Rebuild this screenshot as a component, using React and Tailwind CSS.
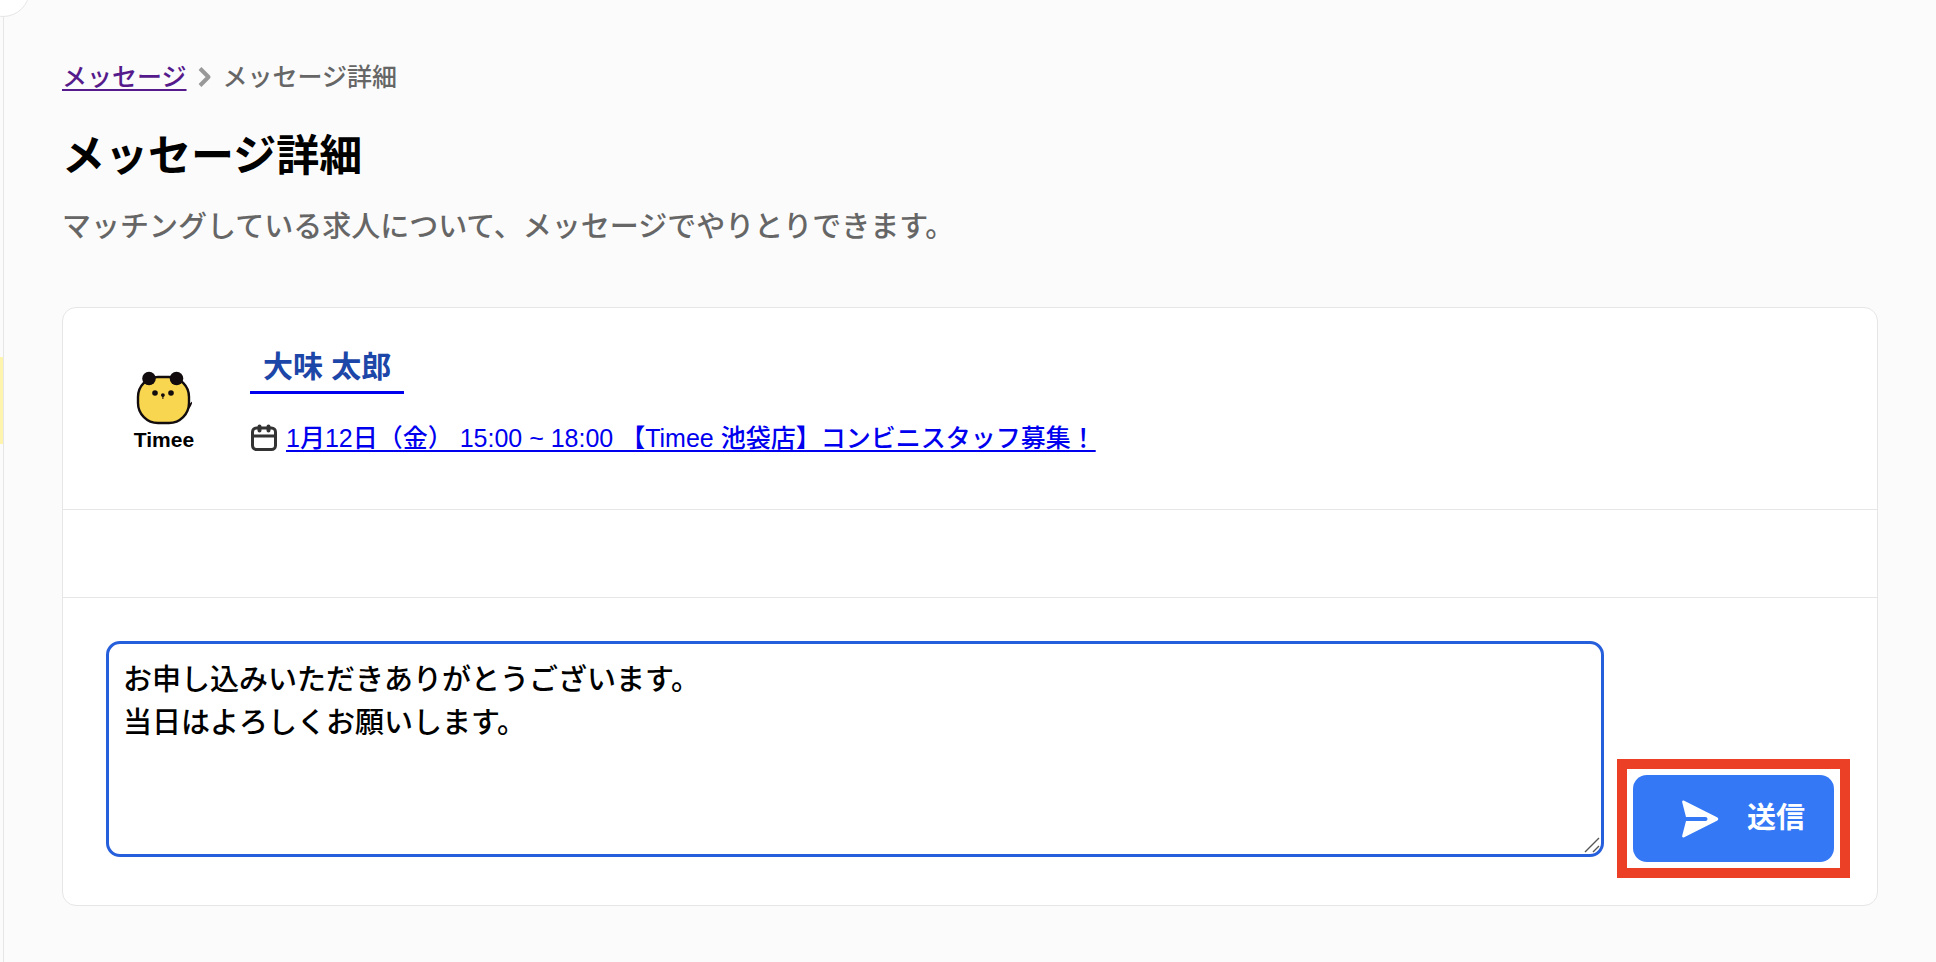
import { useState } from 'react';

function ChevronIcon() {
    return (
        <svg viewBox="0 0 14 20" className="w-[14px] h-5 text-[#999999]" fill="none" stroke="currentColor" strokeWidth="4" strokeLinejoin="round" aria-hidden="true">
            <path d="M2 1.5 10.5 10 2 18.5" />
        </svg>
    );
}

function CalendarIcon() {
    return (
        <svg viewBox="0 0 28 28" className="w-7 h-7 shrink-0 text-[#333333]" fill="none" stroke="currentColor" strokeWidth="3" strokeLinecap="round" aria-hidden="true">
            <rect x="2.5" y="4" width="23" height="21.5" rx="4" />
            <path d="M2.5 12h23" />
            <path d="M9.5 2.5v4M18.5 2.5v4" strokeWidth="4" />
        </svg>
    );
}

function SendIcon() {
    return (
        <svg viewBox="0 0 38 38" className="w-[38px] h-[38px]" fill="currentColor" aria-hidden="true">
            <path d="M1.2 2.2C.9.9 2 .3 3.2.8L36 17.2c1.7.9 1.7 2.7 0 3.6L3.2 37.2C2 37.7.9 37.1 1.2 35.8L5 21h19.5a2 2 0 0 0 0-4H5Z" />
        </svg>
    );
}

function ResizeGrip() {
    return (
        <svg viewBox="0 0 16 16" className="pointer-events-none absolute right-1 bottom-1 w-4 h-4" fill="none" stroke="#555555" strokeWidth="1.4" aria-hidden="true">
            <path d="M1 15 15 1M9 15l6-6" />
        </svg>
    );
}

function TimeeLogo() {
    return (
        <div className="flex w-[62px] flex-col items-center">
            <svg viewBox="0 0 56 54" className="w-14 h-[54px]" aria-hidden="true">
                <path d="M49 36c3-1.500 5.500-3.500 7.500-6C56 34.500 53 39 47 43Z" fill="#120c0e" />
                <rect x="2" y="6" width="51" height="46" rx="20" fill="#f8d650" stroke="#120c0e" strokeWidth="2.4" />
                <circle cx="13" cy="7.5" r="6.8" fill="#120c0e" />
                <circle cx="40.5" cy="7.5" r="6.8" fill="#120c0e" />
                <circle cx="19" cy="22" r="2.8" fill="#120c0e" />
                <circle cx="35" cy="22" r="2.8" fill="#120c0e" />
                <path d="M25 24a1.9 1.8 0 1 1 3.8 0c0 1-.8 1.800-1.400 2v2h-1v-2c-.6-.2-1.400-1-1.400-2Z" fill="#120c0e" />
            </svg>
            <span className="mt-[5px] text-[21px] leading-5 font-bold text-black">Timee</span>
        </div>
    );
}

export default function App() {
    const [message, setMessage] = useState('お申し込みいただきありがとうございます。\n当日はよろしくお願いします。');

    return (
        <div className="flex min-h-screen overflow-hidden bg-[#fbfbfb] font-medium font-['Liberation_Sans','Noto_Sans_CJK_JP',sans-serif]">
            {/* Edge of the collapsed side menu */}
            <aside className="relative w-1 shrink-0 border-r border-[#e6e6e6] pt-[357px]">
                <div className="h-[87px] bg-[#fff4ae]"></div>
                <div className="absolute -top-[38px] -left-6 w-[54px] h-[55px] rounded-full border border-[#e6e6e6] bg-white"></div>
            </aside>

            <main className="min-w-0 flex-1 px-[58px] pt-[59px] pb-14">
                <nav className="flex items-center text-[25px] leading-9 text-[#666666]">
                    <a href="#messages" className="text-[#551a8b] underline decoration-2 underline-offset-3">メッセージ</a>
                    <span className="mx-[11px]"><ChevronIcon /></span>
                    <span>メッセージ詳細</span>
                </nav>

                <h1 className="mt-[31px] text-[43px] leading-[60px] font-bold text-black">メッセージ詳細</h1>
                <p className="mt-5 text-[29px] leading-[43px] text-[#666666]">マッチングしている求人について、メッセージでやりとりできます。</p>

                <section className="mt-[58px] rounded-[14px] border border-[#e6e6e6] bg-white">
                    <div className="flex h-[202px] border-b border-[#e6e6e6] pt-[29px] pl-[70px]">
                        <div className="mt-[34px]"><TimeeLogo /></div>
                        <div className="ml-[55px]">
                            <a href="#worker" className="inline-block border-b-[3px] border-[#0000ee] px-[13px] pt-[7px] pb-px text-[30px] leading-[46px] font-bold text-[#1c46a8]">大味 太郎</a>
                            <div className="mt-[26px] flex items-center gap-2">
                                <CalendarIcon />
                                <a href="#offer" className="text-[25px] leading-9 text-[#0000ee] underline decoration-2 underline-offset-3">1月12日（金） 15:00 ~ 18:00 【Timee 池袋店】コンビニスタッフ募集！</a>
                            </div>
                        </div>
                    </div>

                    <div className="h-[88px] border-b border-[#e6e6e6]"></div>

                    <form className="flex items-end gap-[29px] p-[43px]" onSubmit={e => e.preventDefault()}>
                        <div className="relative mb-[5px] min-w-0 flex-1">
                            <textarea
                                aria-label="メッセージ"
                                value={message}
                                onChange={e => setMessage(e.target.value)}
                                className="block h-[216px] w-full resize-none rounded-[14px] border-[3px] border-[#265fdb] bg-white px-[14px] py-[15px] text-[29px] leading-[43px] text-black outline-none"
                            />
                            <ResizeGrip />
                        </div>
                        <div className="relative shrink-0">
                            <button type="submit" className="flex h-[87px] w-[201px] items-center justify-end gap-7 rounded-[14px] bg-[#3478f6] pr-[29px] text-[29px] font-bold text-white">
                                <SendIcon />
                                送信
                            </button>
                            <div className="pointer-events-none absolute -inset-4 border-[10px] border-[#eb4025]"></div>
                        </div>
                    </form>
                </section>
            </main>
        </div>
    );
}
